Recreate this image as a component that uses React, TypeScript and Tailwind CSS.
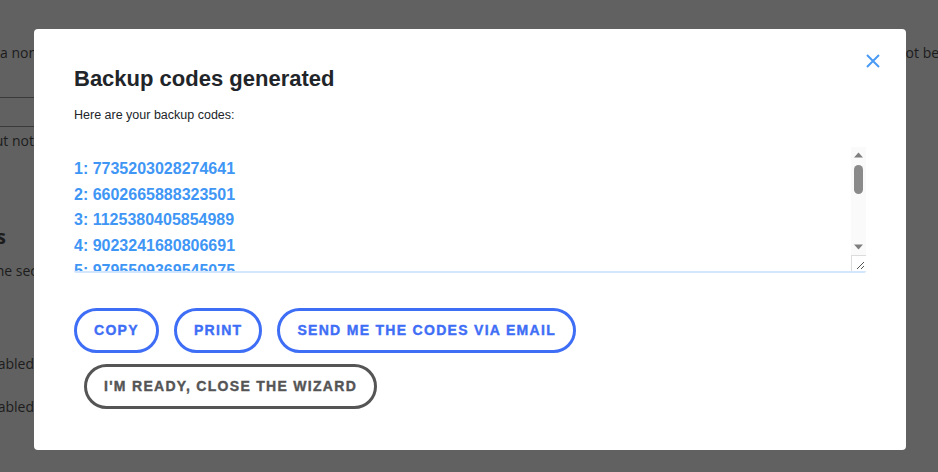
import React from "react";

const codes = [
  "1: 7735203028274641",
  "2: 6602665888323501",
  "3: 1125380405854989",
  "4: 9023241680806691",
  "5: 9795509369545075",
  "6: 4413290387263012",
  "7: 5520174893021786",
  "8: 3308841265937420",
];

const btnBlue =
  "h-[45px] px-[17px] rounded-full border-[3px] border-[#3f6ef6] text-[#3f6ef6] text-[14px] font-bold tracking-[1.3px] whitespace-nowrap [-webkit-text-stroke:0.4px_#3f6ef6]";

export default function App() {
  return (
    <div className="relative w-[938px] h-[472px] overflow-hidden bg-[#616161]" style={{ fontFamily: "'Open Sans', sans-serif" }}>
      {/* background page (dimmed) */}
      <div className="flex justify-between w-full h-full text-[#1c1c1c] text-[14px]">
        <div className="w-[34px] overflow-hidden flex flex-col items-end">
          <div className="mt-[40px] whitespace-nowrap leading-[26px] -mr-[3px]">a non</div>
          <div className="mt-[31px] w-full h-px bg-[#3a3a3a] shrink-0" />
          <div className="mt-[28px] w-full h-px bg-[#3a3a3a] shrink-0" />
          <div className="mt-[1px] whitespace-nowrap leading-[26px] mr-0">out not</div>
          <div className="mt-[70px] whitespace-nowrap leading-[26px] font-bold text-[20px] mr-[28px]">s</div>
          <div className="mt-[8px] whitespace-nowrap leading-[26px] -mr-[3px]">the sec</div>
          <div className="mt-[67px] whitespace-nowrap leading-[26px]">abled</div>
          <div className="mt-[17px] whitespace-nowrap leading-[26px]">abled</div>
        </div>
        <div className="w-[32px] overflow-hidden flex flex-col items-start">
          <div className="mt-[40px] whitespace-nowrap leading-[26px] -ml-[9px]">not be</div>
        </div>
      </div>

      {/* modal */}
      <div
        className="absolute left-[34px] top-[29px] w-[872px] h-[421px] bg-white rounded-[4px] pl-[40px] pr-[40px] pt-[35px]"
        style={{ fontFamily: "'Liberation Sans', Arial, sans-serif" }}
      >
        <button className="absolute right-[26px] top-[25px] w-[14px] h-[14px] text-[#4a9af5]">
          <svg viewBox="0 0 14 14" width="14" height="14" fill="none" stroke="currentColor" strokeWidth="2">
            <path d="M1 1L13 13M13 1L1 13" />
          </svg>
        </button>
        <h2 className="text-[22px] font-bold text-[#212529] leading-[30px]">Backup codes generated</h2>
        <p className="mt-[13px] text-[12.5px] text-[#212529] leading-[16px]">Here are your backup codes:</p>

        {/* textarea-like code box */}
        <div className="mt-[24px] flex w-[792px] h-[126px] border-b-2 border-[#d3e6fc] rounded-b-[2px]">
          <div className="flex-1 overflow-hidden pt-[9px] font-bold text-[16px] leading-[25.6px] text-[#4096f5]">
            {codes.map((c) => (
              <div key={c}>{c}</div>
            ))}
          </div>
          <div className="w-[15px] flex flex-col">
            <div className="flex-1 bg-[#fafafa] flex flex-col items-center">
              <svg width="15" height="14" viewBox="0 0 15 14" className="shrink-0">
                <path d="M3 10.5L7.5 5.5L12 10.5Z" fill="#7f7f7f" />
              </svg>
              <div className="w-[9px] h-[29px] rounded-full bg-[#8a8a8a] mt-[4px]" />
              <div className="flex-1" />
              <svg width="15" height="14" viewBox="0 0 15 14" className="shrink-0">
                <path d="M3 3.5L7.5 8.5L12 3.5Z" fill="#7f7f7f" />
              </svg>
            </div>
            <div className="h-[16px] border-l border-t border-[#dcdcdc] bg-white">
              <svg width="14" height="15" viewBox="0 0 14 15">
                <path d="M5 13L12 6M9 13L12 10" stroke="#555" strokeWidth="1" fill="none" />
              </svg>
            </div>
          </div>
        </div>

        <div className="mt-[35px] flex gap-[15px]">
          <button className={btnBlue}>COPY</button>
          <button className={btnBlue}>PRINT</button>
          <button className={btnBlue}>SEND ME THE CODES VIA EMAIL</button>
        </div>
        <div className="mt-[11px] flex">
          <button className="ml-[10px] h-[45px] px-[17px] rounded-full border-[3px] border-[#555555] text-[#555555] text-[14px] font-bold tracking-[1.3px] whitespace-nowrap [-webkit-text-stroke:0.4px_#555555]">
            I'M READY, CLOSE THE WIZARD
          </button>
        </div>
      </div>
    </div>
  );
}
